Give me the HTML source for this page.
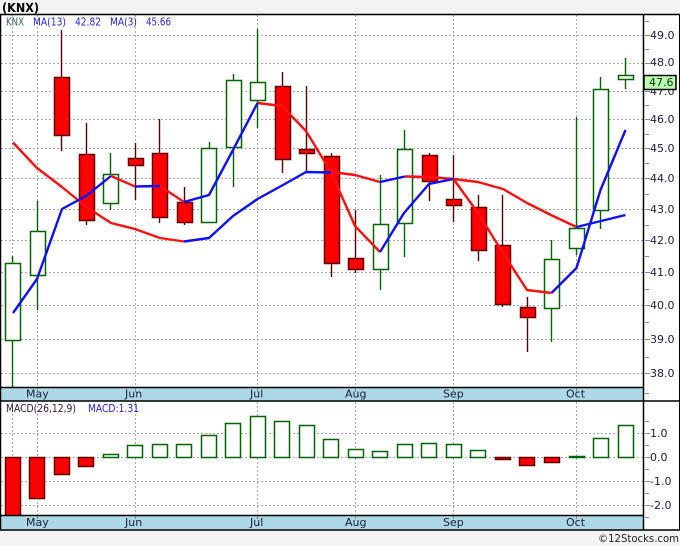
<!DOCTYPE html>
<html><head><meta charset="utf-8"><style>
html,body{margin:0;padding:0;background:#f3f3f3}
svg{display:block}
text{font-family:"DejaVu Sans",sans-serif}
.g{stroke:#a8a8a8;stroke-width:1;stroke-dasharray:2 2;fill:none}
.t{stroke:#888;stroke-width:1}
.u rect{fill:#fff;stroke:#006400;stroke-width:1.5}
.u line{stroke:#006400;stroke-width:1.4}
.d rect{fill:#f00;stroke:#660000;stroke-width:1.5}
.d line{stroke:#5a0000;stroke-width:1.4}
.l text{font-size:11px;fill:#1c1c48}
.m text{font-size:11px;fill:#1c1c3c}
.s{font-size:11px}
.r{fill:none;stroke:#ff1010;stroke-width:2.4;stroke-linejoin:round}
.b{fill:none;stroke:#1010ff;stroke-width:2.4;stroke-linejoin:round}
</style></head><body>
<svg xmlns="http://www.w3.org/2000/svg" width="680" height="546" viewBox="0 0 680 546">
<rect width="680" height="546" fill="#f3f3f3"/>
<rect x="0" y="14" width="680" height="516" fill="#fff"/>
<text x="2" y="12" font-weight="700" fill="#000" style="font-size:12.5px" textLength="37" lengthAdjust="spacingAndGlyphs">(KNX)</text>

<g class="g">
<path d="M1 35.5H643M1 63.5H643M1 91.5H643M1 119.5H643M1 148.5H643M1 178.5H643M1 209.5H643M1 240.5H643M1 272.5H643M1 305.5H643M1 339.5H643M1 373.5H643"/>
<path d="M1 433.5H643M1 457.5H643M1 481.5H643M1 505.5H643"/>
<path d="M12.5 15V387M37.5 15V387M135.5 15V387M257.5 15V387M355.5 15V387M453.5 15V387M576.5 15V387"/>
<path d="M12.5 402V515M37.5 402V515M135.5 402V515M257.5 402V515M355.5 402V515M453.5 402V515M576.5 402V515"/>
</g>

<g class="u">
<line x1="12.5" y1="256" x2="12.5" y2="387"/><rect x="5.5" y="263.5" width="15" height="77"/>
<line x1="37.5" y1="201" x2="37.5" y2="310"/><rect x="30.5" y="231.5" width="15" height="44"/>
<line x1="110.5" y1="153" x2="110.5" y2="210"/><rect x="103.5" y="174.5" width="15" height="29"/>
<line x1="209.5" y1="142" x2="209.5" y2="222"/><rect x="201.5" y="148.5" width="15" height="74"/>
<line x1="233.5" y1="74" x2="233.5" y2="187"/><rect x="226.5" y="80.5" width="15" height="67"/>
<line x1="257.5" y1="29" x2="257.5" y2="128"/><rect x="250.5" y="82.5" width="15" height="18"/>
<line x1="380.5" y1="175" x2="380.5" y2="290"/><rect x="373.5" y="224.5" width="15" height="45"/>
<line x1="404.5" y1="130" x2="404.5" y2="257"/><rect x="397.5" y="149.5" width="15" height="74"/>
<line x1="551.5" y1="240" x2="551.5" y2="342"/><rect x="544.5" y="259.5" width="15" height="49"/>
<line x1="576.5" y1="117" x2="576.5" y2="255"/><rect x="569.5" y="228.5" width="15" height="20"/>
<line x1="600.5" y1="77" x2="600.5" y2="229"/><rect x="593.5" y="89.5" width="15" height="121"/>
<line x1="625.5" y1="58" x2="625.5" y2="89"/><rect x="618.5" y="75.5" width="15" height="4"/>
</g>
<g class="d">
<line x1="61.5" y1="30" x2="61.5" y2="151"/><rect x="54.5" y="77.5" width="15" height="58"/>
<line x1="86.5" y1="123" x2="86.5" y2="225"/><rect x="79.5" y="154.5" width="15" height="66"/>
<line x1="135.5" y1="143" x2="135.5" y2="200"/><rect x="128.5" y="158.5" width="15" height="7"/>
<line x1="159.5" y1="119" x2="159.5" y2="223"/><rect x="152.5" y="153.5" width="15" height="64"/>
<line x1="184.5" y1="187" x2="184.5" y2="225"/><rect x="177.5" y="202.5" width="15" height="20"/>
<line x1="282.5" y1="72" x2="282.5" y2="173"/><rect x="275.5" y="86.5" width="15" height="73"/>
<line x1="306.5" y1="86" x2="306.5" y2="172"/><rect x="299.5" y="149.5" width="15" height="4"/>
<line x1="331.5" y1="153" x2="331.5" y2="277"/><rect x="324.5" y="156.5" width="15" height="107"/>
<line x1="355.5" y1="210" x2="355.5" y2="273"/><rect x="348.5" y="258.5" width="15" height="11"/>
<line x1="429.5" y1="153" x2="429.5" y2="201"/><rect x="422.5" y="155.5" width="15" height="26"/>
<line x1="453.5" y1="155" x2="453.5" y2="222"/><rect x="446.5" y="199.5" width="15" height="6"/>
<line x1="478.5" y1="195" x2="478.5" y2="261"/><rect x="471.5" y="207.5" width="15" height="43"/>
<line x1="502.5" y1="195" x2="502.5" y2="307"/><rect x="495.5" y="245.5" width="15" height="59"/>
<line x1="527.5" y1="297" x2="527.5" y2="352"/><rect x="520.5" y="307.5" width="15" height="10"/>
</g>

<path class="r" d="M13 142.5L37 168L62 187L86.5 207L111 223L135 229L160 238L184 241.5"/>
<path class="r" d="M111 176L135 186.500"/>
<path class="r" d="M160 186L184 202"/>
<path class="r" d="M257.500 103L282 106L306 131L331 172L355 226L380 252"/>
<path class="r" d="M331 172L355 175L380 182"/>
<path class="r" d="M405 176.500L429 177L453.500 179L478 182L503 189L527 203L551 215L576.500 227"/>
<path class="r" d="M453.500 179L478 213L503 253L527 290L551.500 293"/>
<path class="b" d="M13 313L37 279L62 209L86 196L111 176"/>
<path class="b" d="M135 186.500L160 186"/>
<path class="b" d="M184 202L209 195L233 150L257.500 103"/>
<path class="b" d="M184 241.500L209 238L233 216L257.500 199L283 185L306 172L331 172.500"/>
<path class="b" d="M380 182L405 176.500"/>
<path class="b" d="M380 252L404 213L429 184L453.500 179"/>
<path class="b" d="M551.500 293L576.500 268L600.500 190L625.500 130"/>
<path class="b" d="M576.500 227L625.500 215"/>

<g class="u">
<rect x="103.500" y="454.500" width="15" height="3"/>
<rect x="127.500" y="445.500" width="15" height="12"/>
<rect x="152.500" y="444.500" width="15" height="13"/>
<rect x="176.500" y="444.500" width="15" height="13"/>
<rect x="201.500" y="435.500" width="15" height="22"/>
<rect x="225.500" y="423.500" width="15" height="34"/>
<rect x="250.500" y="416.500" width="15" height="41"/>
<rect x="274.500" y="421.500" width="15" height="36"/>
<rect x="299.500" y="425.500" width="15" height="32"/>
<rect x="323.500" y="439.500" width="15" height="18"/>
<rect x="348.500" y="449.500" width="15" height="8"/>
<rect x="372.500" y="451.500" width="15" height="6"/>
<rect x="397.500" y="444.500" width="15" height="13"/>
<rect x="421.500" y="443.500" width="15" height="14"/>
<rect x="446.500" y="444.500" width="15" height="13"/>
<rect x="470.500" y="450.500" width="15" height="7"/>
<rect x="569.500" y="456.500" width="15" height="1"/>
<rect x="593.500" y="438.500" width="15" height="19"/>
<rect x="618.500" y="425.500" width="15" height="32"/>
</g>
<g class="d">
<rect x="5.500" y="457.500" width="15" height="60"/>
<rect x="29.500" y="457.500" width="15" height="41"/>
<rect x="54.500" y="457.500" width="15" height="17"/>
<rect x="78.500" y="457.500" width="15" height="9"/>
<rect x="495.500" y="457.500" width="15" height="2"/>
<rect x="519.500" y="457.500" width="15" height="8"/>
<rect x="544.500" y="457.500" width="15" height="5"/>
</g>

<rect x="1" y="387" width="642" height="14" fill="#add8e6"/>
<rect x="1" y="515" width="642" height="15" fill="#add8e6"/>
<path d="M37.500 387V392M135.500 387V392M257.500 387V392M355.500 387V392M453.500 387V392M576.500 387V392M37.500 515V519M135.500 515V519M257.500 515V519M355.500 515V519M453.500 515V519M576.500 515V519" class="t"/>

<path d="M0 14.500H680M0 387.500H643M0 401H680M0 515.500H643M0 530H680" stroke="#000" stroke-width="1.500" fill="none"/>
<path d="M0.500 14V530M643.500 14V530" stroke="#000" stroke-width="1.500" fill="none"/>
<path d="M679.500 14V530" stroke="#000" stroke-width="1" fill="none"/>

<path class="t" d="M645 21.500H649M645 35.500H650M645 49.500H649M645 63.500H650M645 77.500H649M645 91.500H650M645 105.500H649M645 119.500H650M645 134.500H649M645 148.500H650M645 163.500H649M645 178.500H650M645 194.500H649M645 209.500H650M645 225.500H649M645 240.500H650M645 256.500H649M645 272.500H650M645 289.500H649M645 305.500H650M645 322.500H649M645 339.500H650M645 357.500H649M645 373.500H650M645 393.500H649M645 421.500H649M645 433.500H650M645 445.500H649M645 457.500H650M645 469.500H649M645 481.500H650M645 493.500H649M645 505.500H650M645 517.500H649"/>

<g class="l">
<text x="650" y="39">49.0</text><text x="650" y="66">48.0</text><text x="650" y="95">47.0</text><text x="650" y="123">46.0</text><text x="650" y="152">45.0</text><text x="650" y="182">44.0</text><text x="650" y="213">43.0</text><text x="650" y="244">42.0</text><text x="650" y="276">41.0</text><text x="650" y="309">40.0</text><text x="650" y="343">39.0</text><text x="650" y="377">38.0</text>
<text x="650" y="437">1.0</text><text x="650" y="461">0.0</text><text x="650" y="485">-1.0</text><text x="650" y="509">-2.0</text>
</g>
<rect x="644" y="75.500" width="32" height="14" fill="#b8ffb0" stroke="#000" stroke-width="1.500"/>
<text x="649" y="86" style="font-size:11px" fill="#103010">47.6</text>

<g class="m">
<text x="26" y="397.500">May</text><text x="125" y="397.500">Jun</text><text x="250" y="397.500">Jul</text><text x="345" y="397.500">Aug</text><text x="443" y="397.500">Sep</text><text x="566" y="397.500">Oct</text>
<text x="26" y="526">May</text><text x="125" y="526">Jun</text><text x="250" y="526">Jul</text><text x="345" y="526">Aug</text><text x="443" y="526">Sep</text><text x="566" y="526">Oct</text>
</g>

<text class="s" x="6" y="25.500" fill="#2f6a5a" textLength="18" lengthAdjust="spacingAndGlyphs">KNX</text>
<text class="s" x="33" y="25.500" fill="#2222ee" textLength="33" lengthAdjust="spacingAndGlyphs">MA(13)</text>
<text class="s" x="75" y="25.500" fill="#2222ee" textLength="26" lengthAdjust="spacingAndGlyphs">42.82</text>
<text class="s" x="110" y="25.500" fill="#2222ee" textLength="27" lengthAdjust="spacingAndGlyphs">MA(3)</text>
<text class="s" x="146" y="25.500" fill="#2222ee" textLength="25" lengthAdjust="spacingAndGlyphs">45.66</text>
<text class="s" x="6" y="412" fill="#301838" textLength="70" lengthAdjust="spacingAndGlyphs">MACD(26,12,9)</text>
<text class="s" x="88" y="412" fill="#2222ee" textLength="51" lengthAdjust="spacingAndGlyphs">MACD:1.31</text>
<text class="s" x="598" y="542" fill="#222" textLength="81" lengthAdjust="spacingAndGlyphs">©12Stocks.com</text>
</svg>
</body></html>
